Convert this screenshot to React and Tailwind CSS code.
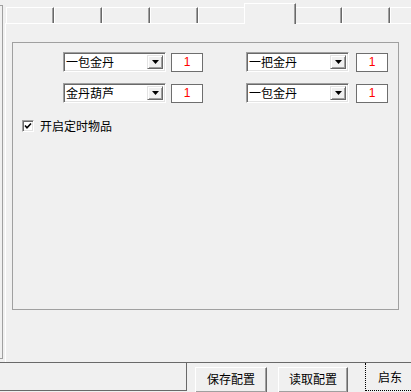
import React from "react";

const FONT = { fontFamily: '"Noto Sans CJK SC", "Noto Sans", sans-serif' };

function Combo({ text }) {
  return (
    <div className="relative flex h-[20px] w-[103px] items-center border border-t-[#a0a0a0] border-l-[#a0a0a0] border-b-white border-r-white bg-white shadow-[inset_1px_1px_#696969,inset_-1px_-1px_#e3e3e3]">
      <span className="pl-[2px] text-[12px] leading-none text-black">{text}</span>
      <div className="absolute right-[2px] top-[2px] flex h-[14px] w-[16px] items-center justify-center border border-t-[#e3e3e3] border-l-[#e3e3e3] border-b-[#696969] border-r-[#696969] bg-[#f0f0f0] shadow-[inset_1px_1px_white,inset_-1px_-1px_#a0a0a0]">
        <svg width="7" height="4" viewBox="0 0 7 4">
          <polygon points="0,0 7,0 3.5,4" fill="black" />
        </svg>
      </div>
    </div>
  );
}

function Num() {
  return (
    <div className="flex h-[19px] w-[32px] items-center justify-center border border-[#6e6e6e] bg-white">
      <span className="text-[12px] leading-none text-[#ff0000]" style={{ fontFamily: '"Liberation Sans", sans-serif' }}>1</span>
    </div>
  );
}

function Tab({ selected }) {
  if (selected) {
    return (
      <div className="relative z-10 -mx-[2px] -mb-[1px] h-[21px] w-[52px] shrink-0 border-t border-l border-r border-t-white border-l-white border-r-[#696969] bg-[#f0f0f0] shadow-[inset_-1px_0_#a0a0a0]" />
    );
  }
  return (
    <div className="h-[16px] w-[48px] shrink-0 border-t border-l border-r border-t-white border-l-white border-r-[#696969] bg-[#f0f0f0] shadow-[inset_-1px_0_#a0a0a0]" />
  );
}

export default function App() {
  const tabs = [0, 1, 2, 3, 4, 5, 6, 7, 8];
  return (
    <div className="flex h-[392px] w-[411px] flex-col overflow-hidden bg-[#f0f0f0] text-black" style={FONT}>
      <div className="flex h-[362px] shrink-0">
        <div className="w-[5px] shrink-0 pt-[5px]">
          <div className="h-[354px] w-[3px] border-t border-r border-b border-[#a0a0a0]" />
        </div>
        <div className="flex flex-1 flex-col">
          <div className="flex h-[23px] items-end pl-[1px]">
            {tabs.map((t) => (
              <Tab key={t} selected={t === 5} />
            ))}
          </div>
          <div className="flex-1 border-t border-l border-white">
            <div className="ml-[6px] mt-[18px] h-[268px] w-[387px] border border-[#a0a0a0]">
              <div className="ml-[50px] mt-[9px] flex items-center">
                <Combo text="一包金丹" />
                <div className="ml-[5px]"><Num /></div>
                <div className="ml-[43px]"><Combo text="一把金丹" /></div>
                <div className="ml-[7px]"><Num /></div>
              </div>
              <div className="ml-[50px] mt-[11px] flex items-center">
                <Combo text="金丹葫芦" />
                <div className="ml-[5px]"><Num /></div>
                <div className="ml-[43px]"><Combo text="一包金丹" /></div>
                <div className="ml-[7px]"><Num /></div>
              </div>
              <div className="ml-[9px] mt-[17px] flex items-center">
                <div className="flex h-[12px] w-[12px] items-center justify-center border border-t-[#a0a0a0] border-l-[#a0a0a0] border-b-white border-r-white bg-white shadow-[inset_1px_1px_#696969,inset_-1px_-1px_#e3e3e3]">
                  <svg width="8" height="8" viewBox="0 0 8 8">
                    <polyline points="1,3.5 3,5.8 7,1.5" fill="none" stroke="black" strokeWidth="1.6" />
                  </svg>
                </div>
                <span className="ml-[6px] text-[12px] leading-none">开启定时物品</span>
              </div>
            </div>
          </div>
        </div>
      </div>
      <div className="flex h-[30px] shrink-0 items-start border-t border-[#696969]">
        <div className="h-[28px] w-[187px] border-r border-b border-[#696969]" />
        <div className="ml-[8px] mt-[4px] flex h-[26px] w-[72px] items-start justify-center border border-t-white border-l-white border-b-[#696969] border-r-[#696969] pt-[3px] shadow-[inset_-1px_-1px_#a0a0a0]">
          <span className="text-[12px] leading-[16px]">保存配置</span>
        </div>
        <div className="ml-[11px] mt-[4px] flex h-[26px] w-[70px] items-start justify-center border border-t-white border-l-white border-b-[#696969] border-r-[#696969] pt-[3px] shadow-[inset_-1px_-1px_#a0a0a0]">
          <span className="text-[12px] leading-[16px]">读取配置</span>
        </div>
        <div className="ml-[17px] flex h-[28px] w-[46px] items-center border-l border-b border-dotted border-black pl-[12px]">
          <span className="text-[12px] leading-none">启东</span>
        </div>
      </div>
    </div>
  );
}
